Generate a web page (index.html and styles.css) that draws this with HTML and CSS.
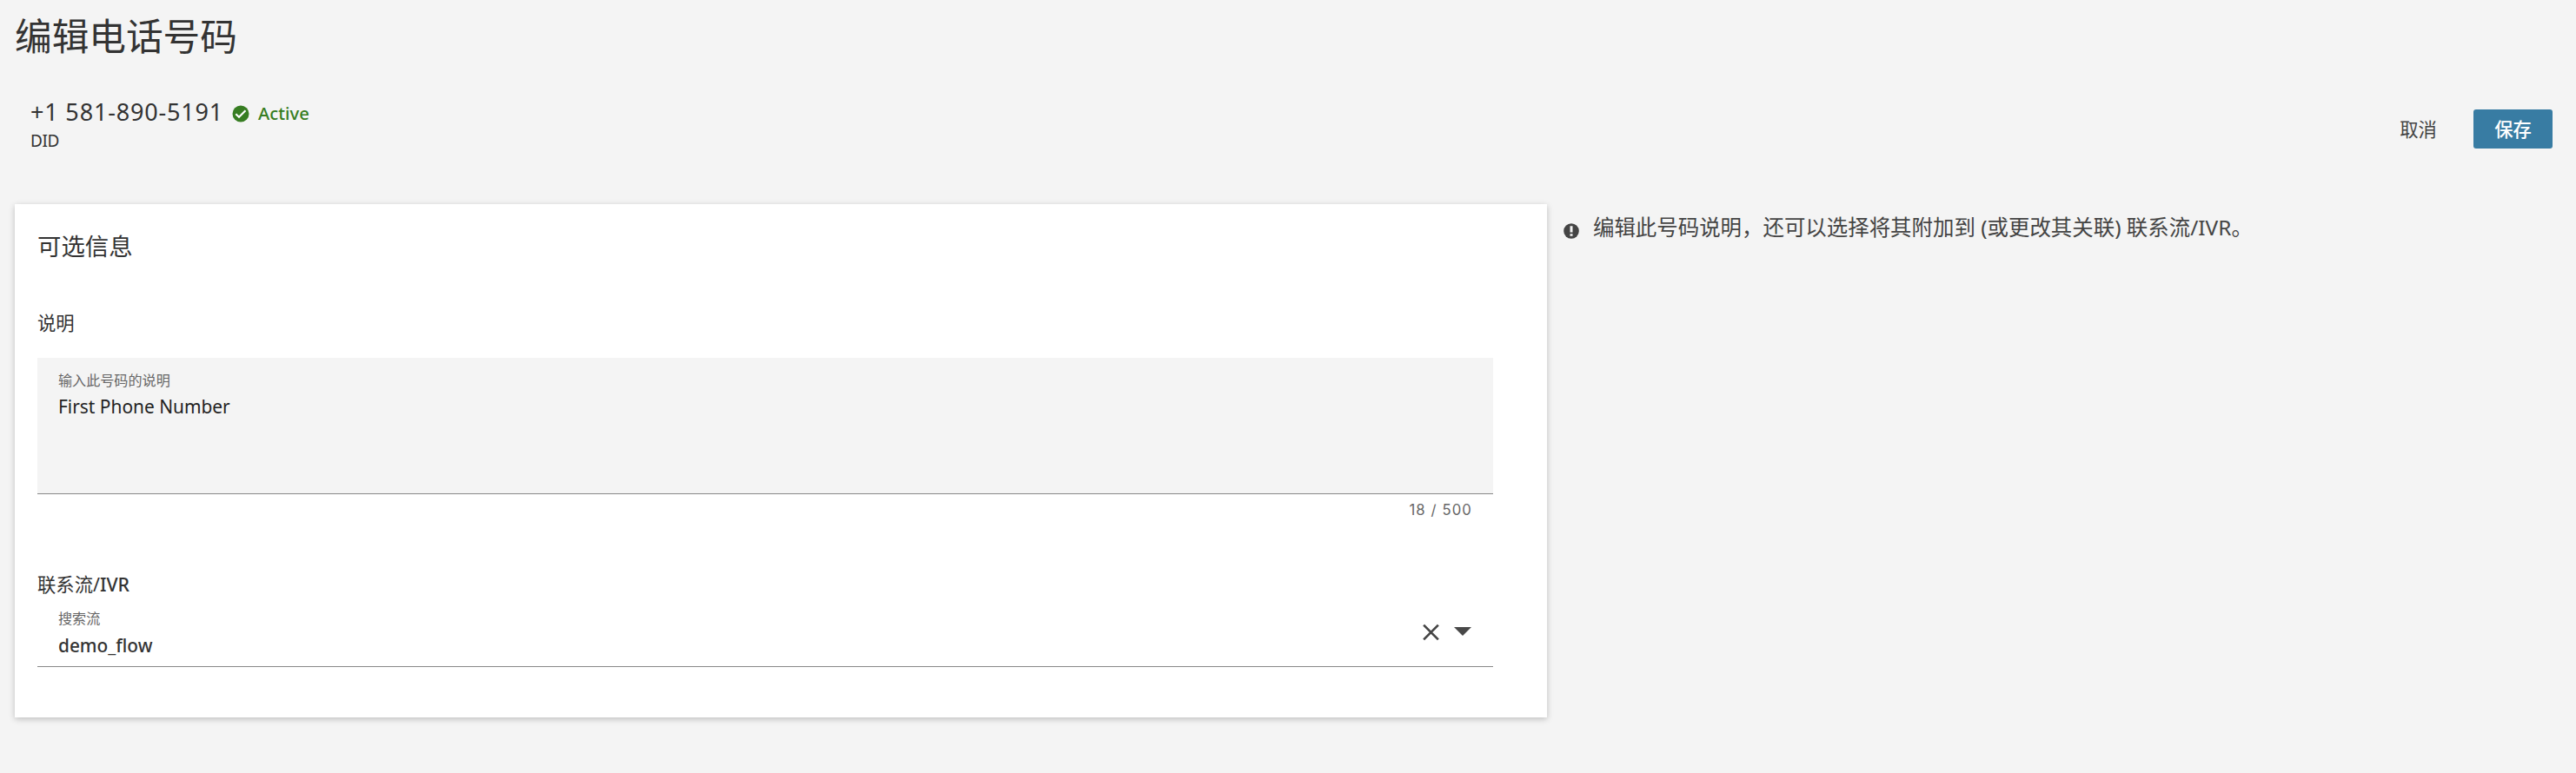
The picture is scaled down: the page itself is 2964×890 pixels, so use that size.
FILE: index.html
```html
<!DOCTYPE html>
<html lang="zh-CN">
<head>
<meta charset="utf-8">
<title>编辑电话号码</title>
<link rel="stylesheet" href="styles.css">
</head>
<body>
<main class="page">
  <h1 class="page-title">编辑电话号码</h1>
  <header class="number-bar">
    <div class="number-info">
      <div class="number-line">
        <span class="number">+1 581-890-5191</span>
        <svg class="status-icon" viewBox="0 0 20 20"><circle cx="10" cy="10" r="9.5" fill="#377d22"/><path d="M4.3 10.2 8 13.7 15.5 6.2" fill="none" stroke="#fff" stroke-width="2.2"/></svg>
        <span class="status">Active</span>
      </div>
      <div class="number-type">DID</div>
    </div>
    <div class="actions">
      <button class="btn btn-cancel">取消</button>
      <button class="btn btn-save">保存</button>
    </div>
  </header>
  <div class="content">
    <section class="card">
      <h2 class="card-title">可选信息</h2>
      <h3 class="field-title">说明</h3>
      <div class="textarea">
        <div class="field-label">输入此号码的说明</div>
        <div class="textarea-value">First Phone Number</div>
      </div>
      <div class="counter">18 / 500</div>
      <h3 class="field-title flow-title">联系流/<span class="ivr">IVR</span></h3>
      <div class="select">
        <div>
          <div class="field-label">搜索流</div>
          <div class="select-value">demo_flow</div>
        </div>
        <div class="select-icons">
          <svg class="clear-icon" viewBox="0 0 20 20"><path d="M1.2 1.2 18.8 18.8M18.8 1.2 1.2 18.8" stroke="#444" stroke-width="2.8"/></svg>
          <svg class="caret-icon" viewBox="0 0 20 10"><path d="M0 0h20L10 10z" fill="#484848"/></svg>
        </div>
      </div>
    </section>
    <aside class="hint">
      <svg class="hint-icon" viewBox="0 0 18 18"><circle cx="9" cy="9" r="8.8" fill="#444"/><path d="M9 3.3v7.1M9 12.2v2.6" stroke="#f4f4f4" stroke-width="3"/></svg>
      <p class="hint-text">编辑此号码说明，还可以选择将其附加到 (或更改其关联) 联系流/IVR。</p>
    </aside>
  </div>
</main>
</body>
</html>
```
FILE: styles.css
```css
* { box-sizing: border-box; }
body {
  margin: 0;
  background: #f4f4f4;
  color: #333;
  font-family: "Noto Sans", "Noto Sans CJK SC", sans-serif;
}
h1, h2, h3, p { margin: 0; font-weight: 400; }
svg { display: block; flex: none; }
.page { width: 2964px; height: 890px; padding: 10px 27px 0 17px; overflow: hidden; }
.page-title { font-size: 42.67px; line-height: 64px; }
.number-bar { display: flex; justify-content: space-between; height: 161px; padding: 38px 0 0 18px; }
.number-line { display: flex; height: 34px; align-items: center; }
.number { width: 221px; font-size: 27px; line-height: 34px; white-space: nowrap; letter-spacing: 0.82px; }
.status-icon { width: 20px; height: 20px; margin: 4px 10px 0 11px; }
.status { font-size: 20.3px; line-height: 34px; padding-top: 2px; color: #377d22; font-weight: 500; }
.number-type { font-size: 19px; line-height: 33px; letter-spacing: -0.4px; }
.actions { display: flex; gap: 18px; padding-top: 14px; }
.btn {
  width: 91px; height: 45px; padding: 0; border: 0; border-radius: 3px;
  background: none; color: #444; font: inherit; font-size: 21.33px; line-height: 45px;
}
.btn-save { background: #387ca3; color: #fff; font-weight: 500; }
.content { display: flex; }
.card {
  width: 1763px; height: 591px; padding: 27px 62px 0 26px; background: #fff;
  box-shadow: 0 2px 7px rgba(0, 0, 0, .22);
}
.card-title { font-size: 27.4px; line-height: 44px; }
.field-title { margin-top: 48px; font-size: 21.33px; line-height: 36px; }
.textarea { height: 157px; margin-top: 22px; padding: 14px 24px 0; background: #f4f4f4; border-bottom: 1px solid #888; }
.field-label { font-size: 16.1px; line-height: 24px; color: #666; }
.textarea-value { font-size: 20.9px; line-height: 36px; color: #222; }
.counter { padding: 5px 24px 0 0; text-align: right; font-family: Inter, sans-serif; font-size: 16.7px; line-height: 26px; letter-spacing: 1.1px; color: #666; }
.flow-title { margin-top: 55px; }
.ivr { font-weight: 500; }
.select { display: flex; justify-content: space-between; height: 77px; padding: 9px 25px 0 24px; border-bottom: 1px solid #888; }
.select-value { font-size: 20.8px; line-height: 38px; font-weight: 500; }
.select-icons { display: flex; gap: 17px; padding-top: 18px; }
.clear-icon { width: 19px; height: 20px; }
.caret-icon { width: 20px; height: 10px; margin-top: 4px; }
.hint { display: flex; padding: 8px 0 0 19px; color: #444; }
.hint-icon { width: 18px; height: 18px; margin: 14px 16px 0 0; }
.hint-text { font-size: 24.45px; line-height: 38px; white-space: nowrap; }
```
